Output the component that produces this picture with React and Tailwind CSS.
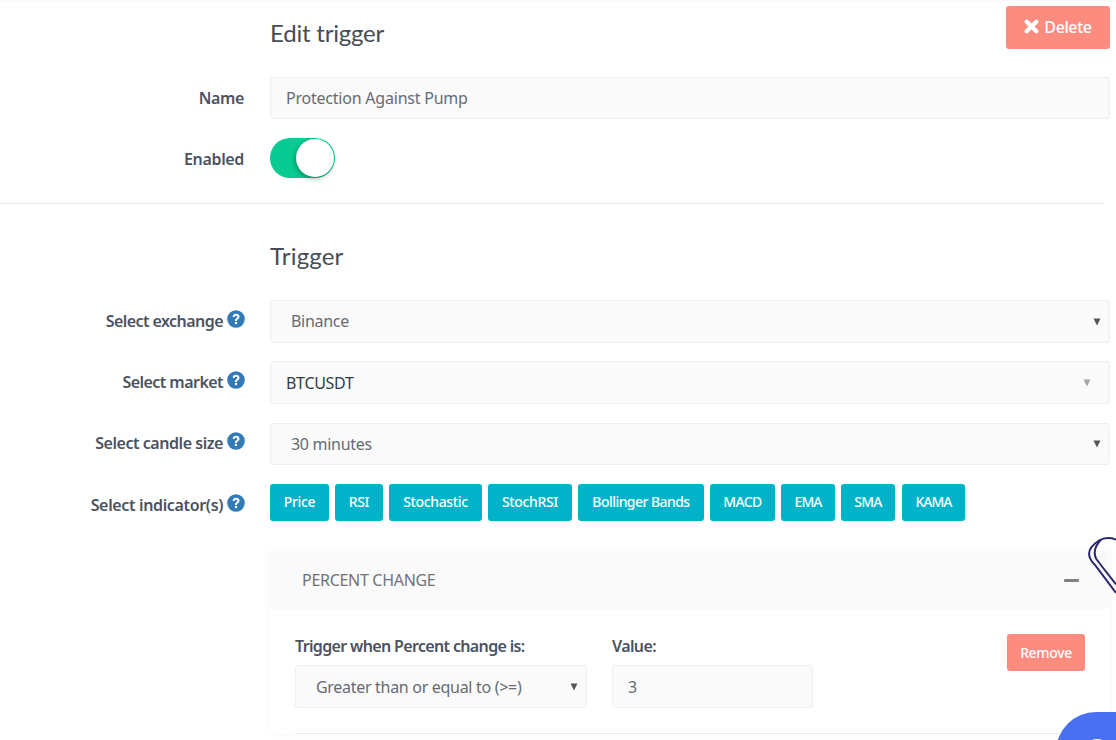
const font = "font-['Noto_Sans','Open_Sans',sans-serif]";

function Caret({ muted }) {
  return (
    <svg width="8" height="8" viewBox="0 0 8 8" className={muted ? "opacity-50" : ""}>
      <path d="M0.500 0.500h7L4 7.500z" fill="#555" />
    </svg>
  );
}

function Help() {
  return (
    <svg width="18" height="18" viewBox="0 0 18 18" className="shrink-0 -translate-y-[2px]">
      <circle cx="9" cy="9" r="8.800" fill="#337ab7" />
      <path d="M5.700 6.900c0-2 1.500-3.200 3.400-3.200s3.400 1.100 3.400 3.100c0 2.500-2.500 2.400-2.500 4.100H7.900c0-2.800 2.400-2.800 2.400-4 0-.7-.5-1.200-1.300-1.200s-1.300.5-1.400 1.400z" fill="#fff" />
      <rect x="7.900" y="11.900" width="2.100" height="2.200" fill="#fff" />
    </svg>
  );
}

function Row({ label, help, children, className, labelClass }) {
  return (
    <div className={`flex items-center ${className}`}>
      <div className={`w-[245px] shrink-0 flex justify-end items-center gap-[4px] text-[16px] font-semibold text-[#4b5361] ${labelClass || ""}`}>
        <span>{label}</span>
        {help && <Help />}
      </div>
      <div className="ml-[25px] flex-1 mr-[6px]">{children}</div>
    </div>
  );
}

function Select({ value, h, dark, muted, pad = "pl-[20px]", caretPad = "pr-[8px]", textClass = "" }) {
  return (
    <div className={`${h} flex items-center justify-between rounded-[3px] border border-[#efefef] bg-[#fafafa] ${pad} ${caretPad} text-[16px] tracking-[-0.3px] ${dark ? "text-[#333c48]" : "text-[#666b73]"}`}>
      <span className={textClass}>{value}</span>
      <Caret muted={muted} />
    </div>
  );
}

const indicators = [
  { name: "Price", w: "w-[59px]", t: "tracking-[-0.35px]" },
  { name: "RSI", w: "w-[48px]", t: "tracking-[-0.35px]" },
  { name: "Stochastic", w: "w-[93px]", t: "tracking-[-0.35px]" },
  { name: "StochRSI", w: "w-[84px]", t: "tracking-[-0.35px]" },
  { name: "Bollinger Bands", w: "w-[126px]", t: "tracking-[-0.55px]" },
  { name: "MACD", w: "w-[65px]", t: "tracking-[-0.6px]" },
  { name: "EMA", w: "w-[54px]", t: "tracking-[-1px]" },
  { name: "SMA", w: "w-[54px]", t: "tracking-[-0.7px]" },
  { name: "KAMA", w: "w-[63px] ml-[1px]", t: "tracking-[-1px]" },
];

export default function App() {
  return (
    <div className={`relative h-[740px] w-[1116px] overflow-hidden bg-white ${font}`}>
      <div className="h-[2px] bg-[#fafafa]" />

      <div className="flex items-start justify-between pl-[270px] pr-[6px] pt-[4px]">
        <h2 className="mt-[11px] font-['Lato',sans-serif] text-[24px] leading-[32px] font-normal tracking-[-0.2px] text-[#474d55]">Edit trigger</h2>
        <button className="flex h-[43px] w-[104px] items-center justify-center gap-[5px] rounded-[3px] bg-[#fc8b80] pb-[2px] text-[16px] font-medium tracking-[-0.4px] text-white">
          <svg width="15" height="15" viewBox="0 0 14 14"><path d="M2.500 2.500l9 9M11.500 2.500l-9 9" stroke="#fff" strokeWidth="3.900" strokeLinecap="round" /></svg>
          Delete
        </button>
      </div>

      <Row label="Name" className="mt-[28px]" labelClass="pr-[1px] tracking-[-0.35px]">
        <div className="flex h-[42px] items-center rounded-[3px] border border-[#efefef] bg-[#fafafa] pl-[15px] text-[16px] tracking-[-0.22px] text-[#666b73]">Protection Against Pump</div>
      </Row>

      <Row label="Enabled" className="mt-[19px]" labelClass="pr-[1px] translate-y-[1px] tracking-[-0.35px]">
        <div className="flex h-[40px] w-[65px] items-center justify-end rounded-full bg-[#07cb92] pr-[1px]">
          <div className="h-[38px] w-[38px] rounded-full bg-white shadow-[-1px_2px_4px_rgba(0,0,0,0.3)]" />
        </div>
      </Row>

      <div className="mt-[25px] mr-[12px] h-px bg-[#ebebeb]" />

      <h2 className="mt-[35px] pl-[270px] font-['Lato',sans-serif] text-[24px] leading-[34px] font-normal tracking-[0.2px] text-[#474d55]">Trigger</h2>

      <Row label="Select exchange" help className="mt-[27px]" labelClass="-translate-y-[1px] tracking-[-0.55px]">
        <Select value="Binance" h="h-[43px]" textClass="-translate-y-[1px]" />
      </Row>
      <Row label="Select market" help className="mt-[18px]" labelClass="-translate-y-[1px] tracking-[-0.55px]">
        <Select value="BTCUSDT" h="h-[43px]" dark muted pad="pl-[15px]" caretPad="pr-[18px]" />
      </Row>
      <Row label="Select candle size" help className="mt-[19px]" labelClass="-translate-y-[1px] tracking-[-0.45px]">
        <Select value="30 minutes" h="h-[42px]" />
      </Row>
      <Row label="Select indicator(s)" help className="mt-[19px]" labelClass="translate-y-[2px] tracking-[-0.35px]">
        <div className="flex h-[37px] gap-[6px]">
          {indicators.map(({ name, w, t }) => (
            <button key={name} className={`h-[37px] rounded-[3px] bg-[#00b3c9] pb-[2px] text-[14px] font-medium text-white ${w} ${t}`}>{name}</button>
          ))}
        </div>
      </Row>

      <div className="mt-[31px] ml-[270px] mr-[6px] shadow-[0_0_12px_rgba(0,0,0,0.04)]">
        <div className="flex h-[57px] items-center justify-between bg-[#fafafa] pl-[32px] pr-[31px] text-[16px] tracking-[-0.3px] text-[#6f7379]">
          <span className="-translate-y-[1px]">PERCENT CHANGE</span>
          <span className="h-[3px] w-[15px] rounded-[1px] bg-[#808080]" />
        </div>
        <div className="bg-white px-[25px] pt-[25px]">
          <div className="flex items-start">
            <div className="w-[292px]">
              <div className="text-[16px] leading-[24px] font-semibold tracking-[-0.65px] text-[#4b5361]">Trigger when Percent change is:</div>
              <div className="mt-[7px]"><Select value="Greater than or equal to (>=)" h="h-[43px]" /></div>
            </div>
            <div className="ml-[25px] w-[201px]">
              <div className="text-[16px] leading-[24px] font-semibold tracking-[-0.6px] text-[#4b5361]">Value:</div>
              <div className="mt-[7px] flex h-[43px] items-center rounded-[3px] border border-[#efefef] bg-[#fafafa] pl-[15px] text-[16px] text-[#666b73]">3</div>
            </div>
            <button className="ml-auto h-[37px] w-[78px] rounded-[3px] bg-[#fc8b80] text-[14px] font-medium tracking-[-0.35px] text-white">Remove</button>
          </div>
          <div className="mt-[25px] h-px bg-[#ebebeb]" />
        </div>
      </div>

      <svg className="absolute left-[1085px] top-[535px]" width="31" height="62" viewBox="0 0 31 62" fill="none" stroke="#27296b" strokeWidth="2">
        <path d="M31 4.500C25 2.500 19 2.500 14 5.500 7 10 2 16 5 23c1 3 3 5 5 7l21 28" />
        <path d="M16 4.500C10 11 8 17 11 23.500c2 3 4 5 6 8l14 18" />
      </svg>
      <div className="absolute left-[1056px] top-[712px] h-[90px] w-[100px] rounded-[40px] bg-[#4870f0]">
        <div className="ml-[27px] mt-[27px] h-[20px] w-[28px] rounded-t-full bg-white" />
      </div>
    </div>
  );
}
